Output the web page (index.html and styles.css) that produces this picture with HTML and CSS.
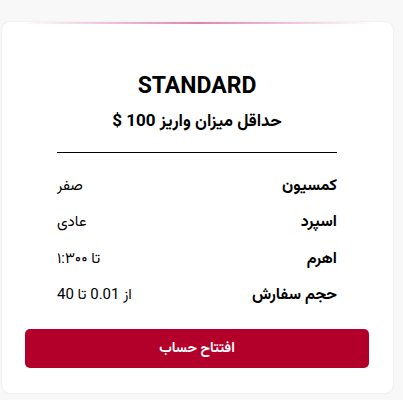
FILE: index.html
```html
<!DOCTYPE html>
<html lang="fa" dir="rtl">
<head>
<meta charset="utf-8">
<title>STANDARD</title>
<link rel="stylesheet" href="styles.css">
</head>
<body>
  <div class="plan-card">
    <h2 class="plan-title">STANDARD</h2>
    <p class="plan-min" dir="ltr"><span class="plan-amount">$ 100</span> <span dir="rtl">حداقل میزان واریز</span></p>
    <div class="plan-body">
      <hr class="plan-sep">
      <ul class="plan-specs">
        <li class="spec"><span class="spec-label">کمسیون</span><span class="spec-value">صفر</span></li>
        <li class="spec"><span class="spec-label">اسپرد</span><span class="spec-value">عادی</span></li>
        <li class="spec"><span class="spec-label">اهرم</span><span class="spec-value">تا ۱:۳۰۰</span></li>
        <li class="spec"><span class="spec-label">حجم سفارش</span><span class="spec-value">از 0.01 تا 40</span></li>
      </ul>
    </div>
    <a class="plan-btn" href="#">افتتاح حساب</a>
  </div>
</body>
</html>
```
FILE: styles.css
```css
html, body {
  margin: 0;
  padding: 0;
}

body {
  background: #f8f8f8;
  font-family: Roboto, "Vazirmatn", "Noto Sans Arabic", "DejaVu Sans", sans-serif;
  color: #000;
  padding: 22px 10px 7px 2px;
}

.plan-card {
  background:
    linear-gradient(90deg, rgba(214, 120, 170, 0) 5%, rgba(214, 120, 170, 0.9) 50%, rgba(214, 120, 170, 0) 95%) top / 100% 2px no-repeat,
    #fff;
  border-radius: 8px;
  box-shadow: 0 0 2px rgba(0, 0, 0, 0.1);
  padding: 51px 24px 25px 23px;
  height: 371px;
  box-sizing: border-box;
  text-align: center;
}

.plan-title {
  margin: 0;
  font-size: 23px;
  line-height: 26px;
  font-weight: 700;
}

.plan-min {
  margin: 8px 0 0;
  font-size: 17px;
  line-height: 26px;
  font-weight: 700;
}

.plan-body {
  padding: 0 32px;
}

.plan-sep {
  margin: 19px 0 0;
  border: 0;
  border-top: 1px solid #000;
  height: 0;
}

.plan-specs {
  list-style: none;
  margin: 15px 0 0;
  padding: 0;
}

.spec {
  display: flex;
  justify-content: space-between;
  align-items: center;
  height: 36.5px;
}

.spec-label {
  font-weight: 700;
  font-size: 16px;
}

.spec-value {
  font-size: 15px;
}

.plan-btn {
  display: flex;
  align-items: center;
  justify-content: center;
  margin-top: 15px;
  height: 39px;
  border-radius: 5px;
  background: #b3002a;
  color: #fff;
  font-size: 14px;
  font-weight: 700;
  text-decoration: none;
}
```
